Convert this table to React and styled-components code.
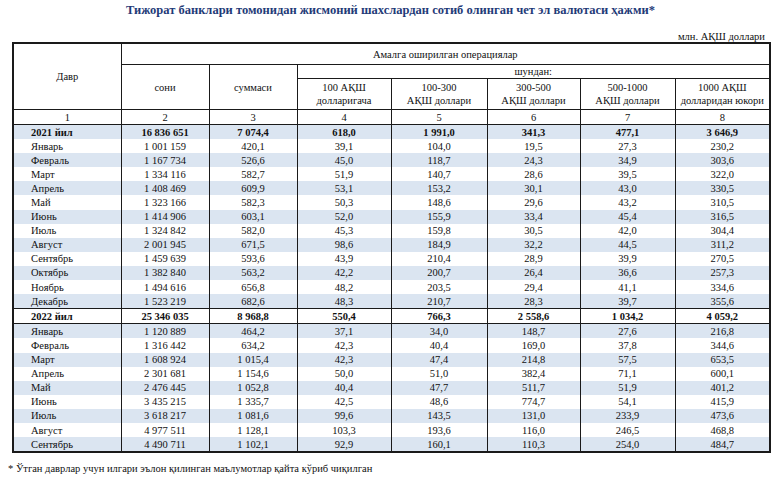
import React from "react";
import styled, { createGlobalStyle } from "styled-components";

const serif = `"Liberation Serif", "Times New Roman", Times, "DejaVu Serif", serif`;

const GlobalStyle = createGlobalStyle`
  body {
    margin: 0;
    background: #fff;
    font-family: ${serif};
    color: #111;
  }
`;

const Page = styled.div`
  width: 780px;
  box-sizing: border-box;
  padding: 0 11px 0 12px;
  font-family: ${serif};
`;

const Title = styled.h1`
  margin: 0;
  height: 20px;
  line-height: 20px;
  text-align: center;
  font-family: ${serif};
  font-size: 12.5px;
  font-weight: bold;
  color: #1f3b78;
`;

const Unit = styled.div`
  height: 22px;
  box-sizing: border-box;
  padding: 11px 4px 0 0;
  line-height: 11px;
  text-align: right;
  font-size: 10.5px;
`;

const Table = styled.table`
  width: 757px;
  table-layout: fixed;
  border-collapse: collapse;
  border: 2px solid #1a1a1a;
  font-family: ${serif};
  font-size: 10.5px;
  color: #111;
`;

const HeadCell = styled.th`
  height: ${(p) => p.$h}px;
  padding: 0;
  border: 1px solid #1a1a1a;
  font-weight: normal;
  text-align: center;
  vertical-align: middle;
  line-height: 13px;
`;

const IndexCell = styled.td`
  height: 14px;
  padding: 0;
  border: 1px solid #1a1a1a;
  text-align: center;
  line-height: 13px;
`;

const Row = styled.tr`
  background: ${(p) => (p.$shade ? "#dbe5f1" : "#fff")};
  font-weight: ${(p) => (p.$year ? "bold" : "normal")};
  border-top: ${(p) => (p.$boxed ? "1px solid #1a1a1a" : "none")};
  border-bottom: ${(p) => (p.$boxed ? "1px solid #1a1a1a" : "none")};
`;

const LabelCell = styled.td`
  height: 14.1px;
  padding: 0 0 0 17px;
  border-left: 1px solid #1a1a1a;
  border-right: 1px solid #1a1a1a;
  line-height: 13px;
  white-space: nowrap;
`;

const NumCell = styled.td`
  padding: 0;
  border-left: 1px solid #1a1a1a;
  border-right: 1px solid #1a1a1a;
  text-align: center;
  line-height: 13px;
  white-space: nowrap;
`;

const Footnote = styled.p`
  margin: 10px 0 0 -4px;
  line-height: 12px;
  font-size: 10.5px;
`;

const widths = [108, 88, 88, 94, 96, 93, 95, 95];

const rows = [
  ["2021 йил", "16 836 651", "7 074,4", "618,0", "1 991,0", "341,3", "477,1", "3 646,9"],
  ["Январь", "1 001 159", "420,1", "39,1", "104,0", "19,5", "27,3", "230,2"],
  ["Февраль", "1 167 734", "526,6", "45,0", "118,7", "24,3", "34,9", "303,6"],
  ["Март", "1 334 116", "582,7", "51,9", "140,7", "28,6", "39,5", "322,0"],
  ["Апрель", "1 408 469", "609,9", "53,1", "153,2", "30,1", "43,0", "330,5"],
  ["Май", "1 323 166", "582,3", "50,3", "148,6", "29,6", "43,2", "310,5"],
  ["Июнь", "1 414 906", "603,1", "52,0", "155,9", "33,4", "45,4", "316,5"],
  ["Июль", "1 324 842", "582,0", "45,3", "159,8", "30,5", "42,0", "304,4"],
  ["Август", "2 001 945", "671,5", "98,6", "184,9", "32,2", "44,5", "311,2"],
  ["Сентябрь", "1 459 639", "593,6", "43,9", "210,4", "28,9", "39,9", "270,5"],
  ["Октябрь", "1 382 840", "563,2", "42,2", "200,7", "26,4", "36,6", "257,3"],
  ["Ноябрь", "1 494 616", "656,8", "48,2", "203,5", "29,4", "41,1", "334,6"],
  ["Декабрь", "1 523 219", "682,6", "48,3", "210,7", "28,3", "39,7", "355,6"],
  ["2022 йил", "25 346 035", "8 968,8", "550,4", "766,3", "2 558,6", "1 034,2", "4 059,2"],
  ["Январь", "1 120 889", "464,2", "37,1", "34,0", "148,7", "27,6", "216,8"],
  ["Февраль", "1 316 442", "634,2", "42,3", "40,4", "169,0", "37,8", "344,6"],
  ["Март", "1 608 924", "1 015,4", "42,3", "47,4", "214,8", "57,5", "653,5"],
  ["Апрель", "2 301 681", "1 154,6", "50,0", "51,0", "382,4", "71,1", "600,1"],
  ["Май", "2 476 445", "1 052,8", "40,4", "47,7", "511,7", "51,9", "401,2"],
  ["Июнь", "3 435 215", "1 335,7", "42,5", "48,6", "774,7", "54,1", "415,9"],
  ["Июль", "3 618 217", "1 081,6", "99,6", "143,5", "131,0", "233,9", "473,6"],
  ["Август", "4 977 511", "1 128,1", "103,3", "193,6", "116,0", "246,5", "468,8"],
  ["Сентябрь", "4 490 711", "1 102,1", "92,9", "160,1", "110,3", "254,0", "484,7"],
];

export default function App() {
  return (
    <Page>
      <GlobalStyle />
      <Title>
        Тижорат банклари томонидан жисмоний шахслардан сотиб олинган чет эл валютаси ҳажми*
      </Title>
      <Unit>млн. АҚШ доллари</Unit>
      <Table>
        <colgroup>
          {widths.map((w, i) => (
            <col key={i} style={{ width: w }} />
          ))}
        </colgroup>
        <thead>
          <tr>
            <HeadCell $h={20} rowSpan={3}>Давр</HeadCell>
            <HeadCell $h={20} colSpan={7}>Амалга оширилган операциялар</HeadCell>
          </tr>
          <tr>
            <HeadCell $h={13} rowSpan={2}>сони</HeadCell>
            <HeadCell $h={13} rowSpan={2}>суммаси</HeadCell>
            <HeadCell $h={13} colSpan={5}>шундан:</HeadCell>
          </tr>
          <tr>
            <HeadCell $h={30}>100 АҚШ<br />долларигача</HeadCell>
            <HeadCell $h={30}>100-300<br />АҚШ доллари</HeadCell>
            <HeadCell $h={30}>300-500<br />АҚШ доллари</HeadCell>
            <HeadCell $h={30}>500-1000<br />АҚШ доллари</HeadCell>
            <HeadCell $h={30}>1000 АҚШ<br />долларидан юкори</HeadCell>
          </tr>
          <tr>
            {widths.map((_, i) => (
              <IndexCell key={i}>{i + 1}</IndexCell>
            ))}
          </tr>
        </thead>
        <tbody>
          {rows.map((r, i) => (
            <Row
              key={i}
              $shade={i % 2 === 0}
              $year={r[0].includes("йил")}
              $boxed={i > 0 && r[0].includes("йил")}
            >
              <LabelCell>{r[0]}</LabelCell>
              {r.slice(1).map((v, j) => (
                <NumCell key={j}>{v}</NumCell>
              ))}
            </Row>
          ))}
        </tbody>
      </Table>
      <Footnote>* Ўтган даврлар учун илгари эълон қилинган маълумотлар қайта кўриб чиқилган</Footnote>
    </Page>
  );
}
